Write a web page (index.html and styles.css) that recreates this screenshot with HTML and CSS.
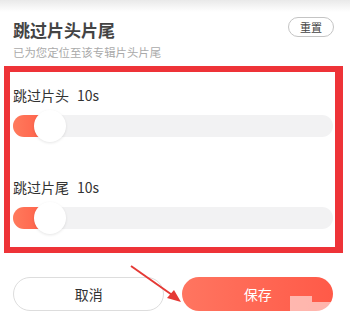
FILE: index.html
```html
<!DOCTYPE html>
<html lang="zh-CN">
<head>
    <meta charset="UTF-8">
    <meta name="viewport" content="width=device-width, initial-scale=1.0">
    <title>跳过片头片尾</title>
    <link rel="stylesheet" href="styles.css">
</head>
<body>
    <div class="sheet">
        <!-- Заголовок -->
        <div class="head">
            <div class="head-text">
                <div class="title">跳过片头片尾</div>
                <div class="subtitle">已为您定位至该专辑片头片尾</div>
            </div>
            <button class="reset">重置</button>
        </div>

        <!-- Ползунки -->
        <div class="marked">
            <div class="row-label">跳过片头<span class="sec">10s</span></div>
            <div class="slider">
                <div class="track"><div class="fill"></div></div>
                <div class="thumb"></div>
            </div>

            <div class="row-label second">跳过片尾<span class="sec">10s</span></div>
            <div class="slider">
                <div class="track"><div class="fill"></div></div>
                <div class="thumb"></div>
            </div>
        </div>

        <!-- Кнопки -->
        <div class="actions">
            <button class="btn cancel">取消</button>
            <button class="btn save">保存</button>
        </div>

        <svg class="arrow" width="70" height="50" viewBox="0 0 70 50">
            <line x1="2" y1="2" x2="46" y2="33" stroke="#e53935" stroke-width="2"/>
            <polygon points="52,38 38,34 45,26" fill="#e53935"/>
        </svg>
        <div class="blur b1"></div>
        <div class="blur b2"></div>
    </div>
</body>
</html>
```

FILE: styles.css
```css
/* Общие стили */
body {
    margin: 0;
    font-family: "Noto Sans CJK SC", "Liberation Sans", sans-serif;
    color: #333;
    background: #fff;
}

.sheet {
    position: relative;
    width: 350px;
    height: 312px;
    overflow: hidden;
    background: linear-gradient(#e9e9e9 0, #fff 12px);
}

/* Заголовок */
.head {
    display: flex;
    justify-content: space-between;
    align-items: flex-start;
    padding: 18px 16px 0 13px;
}

.title {
    font-size: 17px;
    line-height: 24px;
    font-weight: bold;
    color: #444;
}

.subtitle {
    margin-top: 2px;
    font-size: 11.4px;
    line-height: 16px;
    color: #aaa;
}

.reset {
    margin-top: -1px;
    width: 46px;
    height: 20px;
    padding: 0;
    border: 1px solid #c4c4c4;
    border-radius: 10px;
    background: #fff;
    font-family: inherit;
    font-size: 11px;
    color: #444;
}

/* Красная рамка */
.marked {
    margin: 6px 7px 0 4px;
    border: 6px solid #ee3338;
    border-right-width: 8px;
    padding: 13px 2px 13px 3px;
}

.row-label {
    font-size: 14px;
    line-height: 20px;
    color: #333;
}

.row-label.second {
    margin-top: 35px;
}

.sec {
    margin-left: 8px;
}

.slider {
    position: relative;
    height: 32px;
    margin-top: 5px;
    display: flex;
    align-items: center;
}

.track {
    flex: 1;
    height: 22px;
    border-radius: 11px;
    background: #f2f2f3;
    overflow: hidden;
}

.fill {
    width: 40px;
    height: 100%;
    background: linear-gradient(90deg, #ff7a5c, #ff5a45);
}

.thumb {
    position: absolute;
    left: 21px;
    top: 0;
    width: 32px;
    height: 32px;
    border-radius: 50%;
    background: #fff;
    box-shadow: 0 1px 3px rgba(0, 0, 0, 0.1);
}

/* Кнопки */
.actions {
    display: flex;
    gap: 18px;
    padding: 24px 17px 0 13px;
}

.btn {
    flex: 1;
    height: 34px;
    border-radius: 17px;
    font-family: inherit;
    font-size: 14px;
}

.cancel {
    border: 1px solid #ddd;
    background: #fff;
    color: #333;
}

.save {
    flex: 1.01;
    border: none;
    background: linear-gradient(90deg, #ff7560, #ff5a48);
    color: #fff;
}

.arrow {
    position: absolute;
    left: 129px;
    top: 264px;
}

.blur {
    position: absolute;
    background: rgba(255, 255, 255, 0.55);
}

.b1 {
    left: 290px;
    top: 296px;
    width: 22px;
    height: 16px;
}

.b2 {
    left: 312px;
    top: 302px;
    width: 30px;
    height: 10px;
}
```
